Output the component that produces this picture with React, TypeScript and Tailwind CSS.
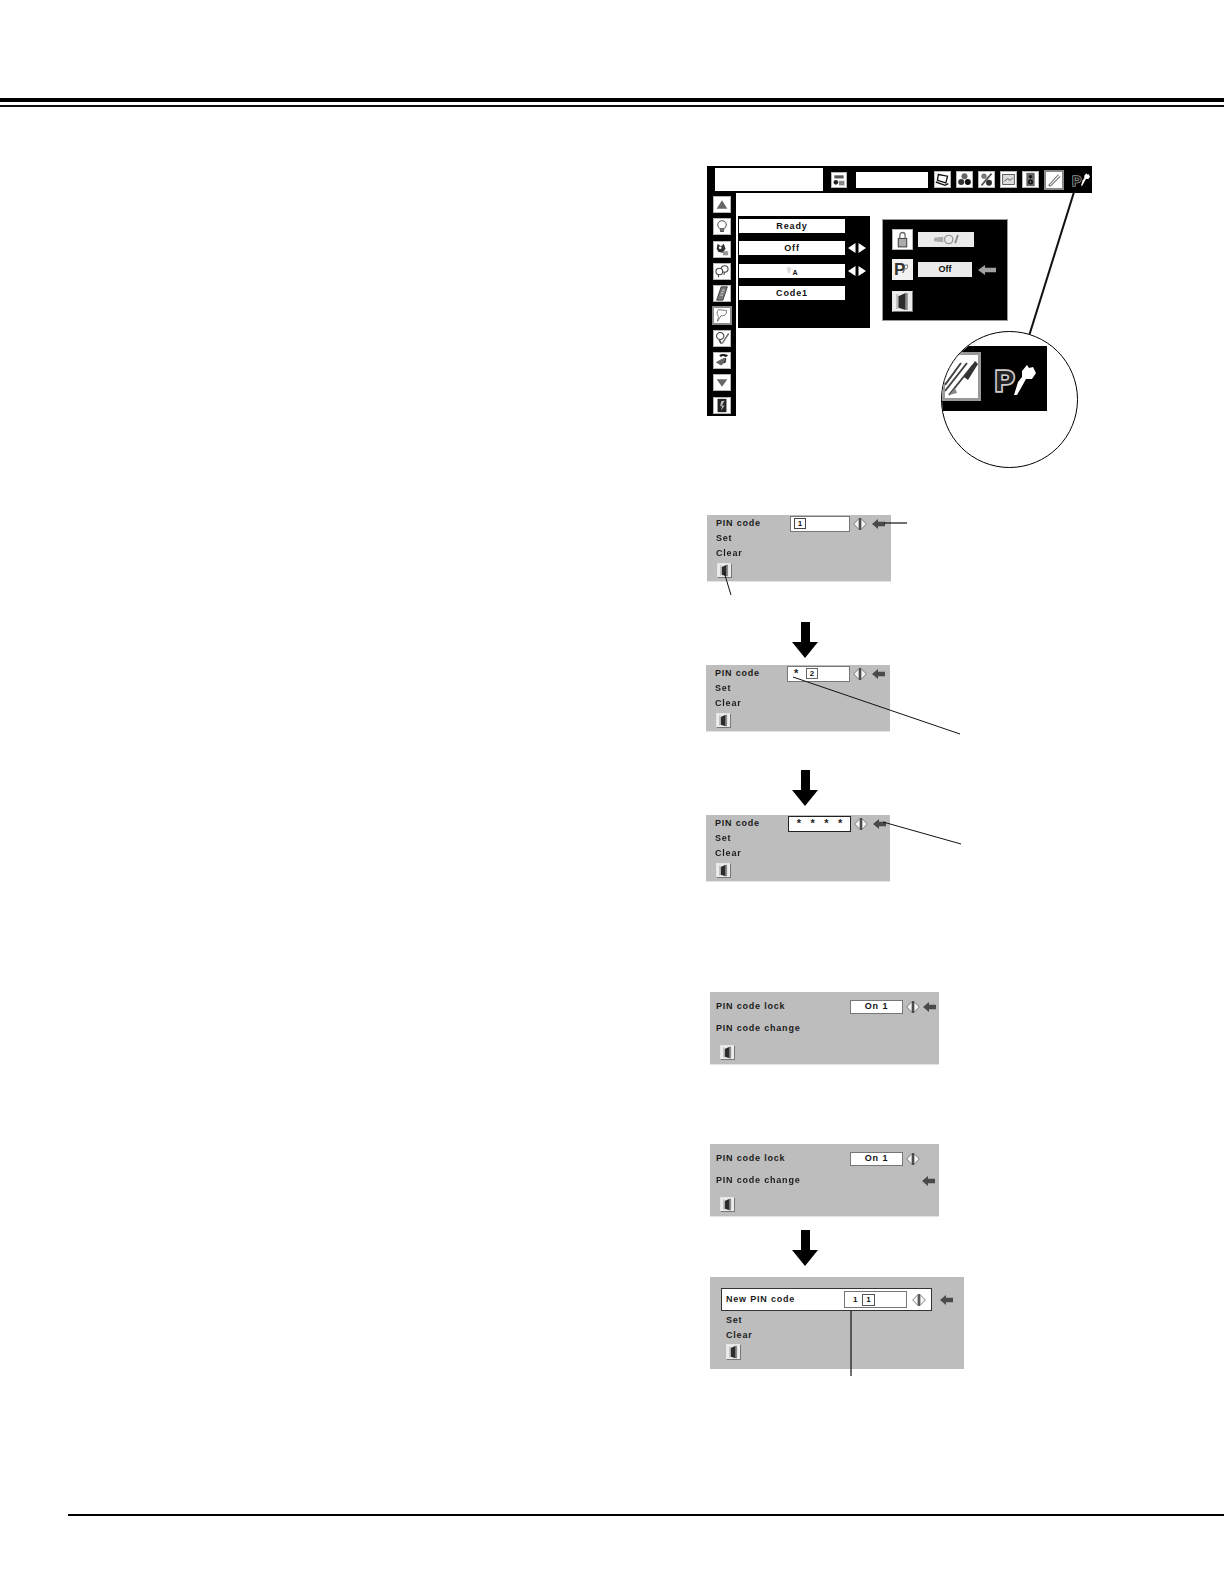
import React from "react";

const FONT = "[font-family:'Liberation_Sans',Arial,sans-serif]";

function Tile({
  w = 18,
  h = 18,
  selected = false,
  children,
}: {
  w?: number;
  h?: number;
  selected?: boolean;
  children: React.ReactNode;
}) {
  return (
    <div
      className={`shrink-0 bg-white ${selected ? "border-2 border-[#8a8a8a]" : "border border-[#b5b5b5]"}`}
      style={{ width: w, height: h }}
    >
      <svg viewBox="0 0 18 18" preserveAspectRatio="none" className="block h-full w-full">
        {children}
      </svg>
    </div>
  );
}

function DoorTile({ w = 15, h = 15 }: { w?: number; h?: number }) {
  return (
    <div className="shrink-0 border-t border-l border-[#e6e6e6] border-r border-b border-r-[#777] border-b-[#777] bg-[#ececec]" style={{ width: w, height: h }}>
      <svg viewBox="0 0 18 18" preserveAspectRatio="none" className="block h-full w-full">
        <path d="M5 4 L12 1 V17 L5 15 Z" fill="#2c2c2c" />
        <path d="M12 1 H14 V17 H12 Z" fill="#8a8a8a" />
        <path d="M3 2 H5 V16 H3 Z" fill="#bbb" />
      </svg>
    </div>
  );
}

const sideIcons: React.ReactNode[] = [
  <path key="a" d="M9 4 L15 14 H3 Z" fill="#666" />,
  <g key="b" fill="none" stroke="#555" strokeWidth="1.2">
    <circle cx="9" cy="7" r="4.8" />
    <path d="M7 12 L7.5 15 H10.5 L11 12" fill="#777" />
  </g>,
  <g key="c">
    <path d="M4 2 L8 5 L11 2 L13 8 L10 13 L5 12 L3 8 Z" fill="#333" />
    <path d="M10 11 H16 V16 H10 Z" fill="#999" />
    <circle cx="7" cy="7" r="1.5" fill="#fff" />
  </g>,
  <g key="d" fill="#fff" stroke="#444" strokeWidth="1.2">
    <circle cx="12" cy="6" r="3.8" />
    <circle cx="6" cy="9" r="3.8" />
    <path d="M5 13 L5 16 M12 10 L11 13" />
  </g>,
  <g key="e">
    <path d="M8 1 H15 L10 17 H3 Z" fill="#777" stroke="#333" />
    <path d="M9 5 L12 5 M8 8 L11 8 M7 11 L10 11" stroke="#ddd" />
  </g>,
  <g key="f" fill="none" stroke="#666" strokeWidth="1">
    <path d="M5 2 L14 3 L14 6 C13 9 10 10 8 9 L4 16 L5 10 C3 8 3 4 5 2 Z" />
  </g>,
  <g key="g">
    <circle cx="7" cy="6" r="4.2" fill="#fff" stroke="#444" strokeWidth="1.2" />
    <path d="M6 11 L8 15" stroke="#444" strokeWidth="2" />
    <path d="M16 2 L9 14 L8 16 L10 15 L17 4 Z" fill="#666" />
  </g>,
  <g key="h">
    <path d="M2 11 L9 7 L14 10 L8 15 Z" fill="#666" />
    <path d="M6 3 C8 0 14 1 16 3 L13 5 C11 3 9 3 8 5 Z" fill="#222" />
    <path d="M10 7 L13 7 L12 12" stroke="#222" fill="none" strokeWidth="1.4" />
  </g>,
  <path key="i" d="M3 5 H15 L9 14 Z" fill="#666" />,
  <g key="j">
    <path d="M4 1 H14 V17 H4 Z" fill="#222" />
    <path d="M8 4 L12 3 L9 9 L12 9 L8 15 L9 10 L7 10 Z" fill="#bbb" />
  </g>,
];

const barIcons: React.ReactNode[] = [
  <g key="a" fill="none" stroke="#111" strokeWidth="1.6">
    <path d="M4 3 L15 5 L13 13 L3 10 Z" />
    <path d="M1 12 L12 16 L16 14" />
  </g>,
  <g key="b" fill="#333">
    <circle cx="9" cy="5" r="3.6" fill="#666" />
    <circle cx="5" cy="12" r="3.6" />
    <circle cx="13" cy="12" r="3.6" fill="#111" />
  </g>,
  <g key="c">
    <circle cx="6" cy="5" r="3.2" fill="#777" />
    <circle cx="12" cy="13" r="3.6" fill="#333" />
    <path d="M15 2 L3 16" stroke="#555" strokeWidth="2.2" />
  </g>,
  <g key="d" fill="none" stroke="#444">
    <rect x="2" y="3" width="14" height="12" fill="#ddd" />
    <path d="M4 11 L8 8 L11 10 L14 7" />
  </g>,
  <g key="e">
    <rect x="4" y="1" width="10" height="16" fill="#666" />
    <circle cx="9" cy="5.5" r="2" fill="#111" />
    <circle cx="9" cy="12" r="3" fill="#111" />
    <circle cx="9" cy="12" r="1" fill="#aaa" />
  </g>,
  <g key="f" fill="none" stroke="#777" strokeWidth="1.2">
    <path d="M3 15 L14 3 M5 16 L16 5" />
    <path d="M3 15 L5 16" />
  </g>,
];

function KeyGlyph({ className = "" }: { className?: string }) {
  return (
    <svg viewBox="0 0 22 30" className={className}>
      <path d="M8 6 L13 0 L15 3 L19 2 L22 8 L18 14 L12 14 L7 23 L3 30 L0 30 L4 17 L8 12 Z" fill="#fff" />
    </svg>
  );
}

function WhiteTriangles() {
  return (
    <svg viewBox="0 0 18 10" className="ml-[3px] h-[10px] w-[18px] shrink-0">
      <path d="M7.5 0 V10 L0 5 Z M10.5 0 V10 L18 5 Z" fill="#fff" />
    </svg>
  );
}

function Spinner() {
  return (
    <svg viewBox="0 0 14 12" className="h-[12px] w-[14px] shrink-0">
      <path d="M6 .5 V11.5 L.7 6 Z" fill="#f4f4f4" stroke="#555" strokeWidth=".7" />
      <path d="M8 .5 V11.5 L13.3 6 Z" fill="#f4f4f4" stroke="#555" strokeWidth=".7" />
      <path d="M7 0 V12" stroke="#222" strokeWidth="1.3" />
    </svg>
  );
}

function GrayArrow() {
  return (
    <svg viewBox="0 0 13 10" className="h-[10px] w-[13px] shrink-0">
      <path d="M0 5 L6 0 V2.8 H13 V7.2 H6 V10 Z" fill="#4a4a4a" />
    </svg>
  );
}

function BigArrow() {
  return (
    <svg viewBox="0 0 26 36" className="block h-[36px] w-[26px]">
      <path d="M9 0 H18 V20 H26 L13 36 L0 20 H9 Z" fill="#000" />
    </svg>
  );
}

const LABEL = "text-[9px] leading-[14.5px] font-bold tracking-[0.8px] text-[#1c1c1c] whitespace-nowrap";
const MENU = "text-[9px] leading-none font-bold tracking-[0.9px] text-[#111]";

function MenuField({ children }: { children: React.ReactNode }) {
  return <div className={`flex h-[14px] w-[106px] items-center justify-center bg-white ${MENU}`}>{children}</div>;
}

function PinEntry({
  className,
  gapClass,
  fieldClass,
  children,
}: {
  className: string;
  gapClass: string;
  fieldClass: string;
  children: React.ReactNode;
}) {
  return (
    <div className={`flex h-[67px] w-[184px] flex-col bg-[#bdbdbd] border-b border-[#e4e4e4] pl-[9px] ${className}`}>
      <div className="flex h-[17px] items-center">
        <span className={`${LABEL} ${gapClass}`}>PIN code</span>
        <div className={`flex h-[16px] items-center bg-white ${fieldClass}`}>{children}</div>
        <div className="ml-[3px]">
          <Spinner />
        </div>
        <div className="ml-[5px]">
          <GrayArrow />
        </div>
      </div>
      <div className="mt-[-2px] flex flex-col">
        <span className={`mt-[1px] ${LABEL}`}>Set</span>
        <span className={LABEL}>Clear</span>
      </div>
      <div className="ml-[1px] mt-[3px]">
        <DoorTile w={15} h={15} />
      </div>
    </div>
  );
}

function LockPanel({ className, arrowOnChange = false }: { className: string; arrowOnChange?: boolean }) {
  return (
    <div className={`flex h-[73px] w-[229px] flex-col border-b border-[#e4e4e4] bg-[#bdbdbd] pl-[6px] ${className}`}>
      <div className="mt-[7px] flex h-[15px] items-center">
        <span className={`w-[134px] ${LABEL}`}>PIN code lock</span>
        <div className="flex h-[14px] w-[53px] items-center justify-center border border-[#777] bg-white text-[9px] font-bold tracking-[0.9px] text-[#111]">
          On 1
        </div>
        <div className="ml-[3px]">
          <Spinner />
        </div>
        {!arrowOnChange && (
          <div className="ml-[3px]">
            <GrayArrow />
          </div>
        )}
      </div>
      <div className="mt-[7px] flex h-[15px] items-center">
        <span className={`w-[206px] ${LABEL}`}>PIN code change</span>
        {arrowOnChange && <GrayArrow />}
      </div>
      <div className="ml-[4px] mt-[9px]">
        <DoorTile w={15} h={15} />
      </div>
    </div>
  );
}

function NewPinPanel() {
  return (
    <div className="ml-[4px] mt-[11px] flex h-[92px] w-[254px] flex-col bg-[#bdbdbd] pl-[11px] pt-[11px]">
      <div className="flex items-center">
        <div className="flex h-[23px] w-[211px] items-center border border-[#333] bg-white pl-[4px]">
          <span className={`w-[118px] ${LABEL}`}>New PIN code</span>
          <div className="flex h-[17px] w-[63px] items-center border border-[#777] pl-[8px] text-[8px] font-bold text-[#111]">
            <span className="w-[9px]">1</span>
            <span className="flex h-[12px] w-[13px] items-center justify-center border border-[#555]">1</span>
          </div>
          <div className="ml-[5px]">
            <Spinner />
          </div>
        </div>
        <div className="ml-[8px]">
          <GrayArrow />
        </div>
      </div>
      <span className={`ml-[5px] mt-[2px] ${LABEL}`}>Set</span>
      <span className={`ml-[5px] ${LABEL}`}>Clear</span>
      <div className="ml-[5px] mt-[2px]">
        <DoorTile w={15} h={16} />
      </div>
    </div>
  );
}

function ArrowDown({ className }: { className: string }) {
  return (
    <div className={`ml-[86px] ${className}`}>
      <BigArrow />
    </div>
  );
}

function TopFigure() {
  return (
    <div className="flex flex-col">
      <div className="ml-[1px] flex h-[27px] w-[385px] items-center bg-black">
        <div className="ml-[8px] h-[23px] w-[108px] bg-white" />
        <div className="ml-[8px]">
          <Tile w={16} h={16}>
            <rect x="3" y="3" width="12" height="4" fill="#555" />
            <circle cx="5" cy="12" r="3" fill="#222" />
            <path d="M9 10 H16 V16 H9 Z" fill="#888" />
          </Tile>
        </div>
        <div className="ml-[9px] h-[16px] w-[72px] bg-white" />
        <div className="ml-[6px] flex w-[132px] items-center gap-[5px]">
          {barIcons.map((ic, i) => (
            <Tile key={i} w={i === 5 ? 20 : 17} h={i === 5 ? 20 : 17} selected={i === 5}>
              {ic}
            </Tile>
          ))}
        </div>
        <div className="ml-[6px] mt-[3px] flex items-center">
          <span className="text-[14px] leading-none font-bold text-[#222] [-webkit-text-stroke:1px_#ccc] [paint-order:stroke_fill] [font-family:'Liberation_Sans',sans-serif]">
            P
          </span>
          <KeyGlyph className="-mt-[3px] h-[13px] w-[9px]" />
        </div>
      </div>
      <div className="ml-[1px] flex items-start">
        <div className="flex h-[223px] w-[29px] flex-col items-center gap-[5.3px] bg-black pt-[3px]">
          {sideIcons.map((ic, i) =>
            i === 5 ? (
              <div key={i} className="-my-[1px]">
                <Tile w={20} h={19} selected>
                  {ic}
                </Tile>
              </div>
            ) : (
              <Tile key={i} w={18} h={17}>
                {ic}
              </Tile>
            )
          )}
        </div>
        <div className="ml-[2px] mt-[23px] flex h-[112px] w-[132px] flex-col gap-[8.4px] bg-black pl-[1px] pt-[3px]">
          <div className="flex items-center">
            <MenuField>Ready</MenuField>
          </div>
          <div className="flex items-center">
            <MenuField>Off</MenuField>
            <WhiteTriangles />
          </div>
          <div className="flex items-center">
            <MenuField>
              <svg viewBox="0 0 8 10" className="mr-[1px] h-[9px] w-[6px]">
                <path d="M4 0 C7 0 8 3 6 6 L5 9 H3 L2 6 C0 3 1 0 4 0 Z" fill="#ddd" />
              </svg>
              <span className="mt-[3px] text-[7px]">A</span>
            </MenuField>
            <WhiteTriangles />
          </div>
          <div className="flex items-center">
            <MenuField>Code1</MenuField>
          </div>
        </div>
        <div className="ml-[12px] mt-[26px] flex h-[102px] w-[126px] flex-col gap-[9px] border border-[#999] bg-black pl-[9px] pt-[9px]">
          <div className="flex items-center gap-[5px]">
            <Tile w={21} h={21}>
              <rect x="5" y="8" width="8" height="8" fill="#aaa" stroke="#444" />
              <path d="M6.5 8 V5 C6.5 1.5 11.5 1.5 11.5 5 V8" fill="none" stroke="#666" strokeWidth="1.2" />
            </Tile>
            <div className="flex h-[15px] w-[56px] items-center justify-center bg-[#eaeaea]">
              <svg viewBox="0 0 30 12" className="h-[11px] w-[28px]">
                <circle cx="18" cy="6" r="4.5" fill="none" stroke="#999" strokeWidth="1.5" />
                <path d="M2 4 L12 3 V9 L2 8 Z" fill="#aaa" />
                <path d="M25 10 L28 1" stroke="#888" strokeWidth="2" />
              </svg>
            </div>
          </div>
          <div className="flex items-center gap-[5px]">
            <div className="flex h-[21px] w-[21px] shrink-0 items-center bg-[#f2f2f2] pl-[2px]">
              <span className="text-[17px] leading-none font-bold text-[#333] [font-family:'Liberation_Sans',sans-serif]">P</span>
              <svg viewBox="0 0 8 12" className="-ml-[3px] -mt-[2px] h-[11px] w-[6px]">
                <path d="M1 12 L3 6 L3 2 L7 1 L8 5 L4 7 Z" fill="none" stroke="#555" />
              </svg>
            </div>
            <div className="flex h-[15px] w-[54px] items-center justify-center bg-[#eaeaea] text-[9px] font-bold text-[#111]">
              Off
            </div>
            <div className="ml-[1px]">
              <svg viewBox="0 0 18 10" className="h-[10px] w-[18px]">
                <path d="M0 5 L7 0 V2.8 H18 V7.2 H7 V10 Z" fill="#a0a0a0" />
              </svg>
            </div>
          </div>
          <div className="mt-[2px]">
            <DoorTile w={21} h={21} />
          </div>
        </div>
      </div>
    </div>
  );
}

function Callout() {
  return (
    <div className="absolute left-[941px] top-[331px] h-[137px] w-[137px] overflow-hidden rounded-full border-[1.5px] border-black bg-white">
      <div className="mt-[14px] flex h-[65px] w-[105px] items-start bg-black">
        <div className="mt-[6px] h-[49px] w-[39px] border-[3px] border-[#999] bg-white">
          <svg viewBox="0 0 33 43" className="block h-full w-full">
            <path d="M0 36 L22 8 M4 40 L28 10 M0 30 L16 8" stroke="#444" strokeWidth="2" fill="none" />
            <path d="M19 22 L30 6 L33 9 L23 25 Z" fill="#333" />
            <path d="M4 40 L12 38 L10 33 Z" fill="#888" />
          </svg>
        </div>
        <div className="ml-[14px] mt-[22px] flex items-start">
          <span className="text-[29px] leading-[26px] font-bold text-[#222] [-webkit-text-stroke:3.5px_#ccc] [paint-order:stroke_fill] [font-family:'Liberation_Sans',sans-serif]">
            P
          </span>
          <KeyGlyph className="-mt-[3px] h-[30px] w-[22px]" />
        </div>
      </div>
    </div>
  );
}

function Leaders() {
  const lines: [number, number, number, number, number][] = [
    [1074, 192, 1029, 336, 2],
    [884, 523, 907, 523, 1.2],
    [724, 572, 731, 595, 1],
    [793, 677, 960, 734, 1],
    [883, 822, 961, 844, 1],
    [851, 1311, 851, 1376, 1.2],
  ];
  return (
    <svg viewBox="0 0 1224 1570" className="pointer-events-none absolute inset-0 h-full w-full">
      {lines.map(([x1, y1, x2, y2, w], i) => (
        <line key={i} x1={x1} y1={y1} x2={x2} y2={y2} stroke="#111" strokeWidth={w} />
      ))}
    </svg>
  );
}

const STAR = "text-[11px] font-bold leading-none text-[#222]";

export default function App() {
  return (
    <div className={`relative h-[1570px] w-[1224px] overflow-hidden bg-white ${FONT}`}>
      <div className="pt-[98px]">
        <div className="h-[4px] bg-black" />
        <div className="mt-[3px] h-[2px] bg-[#111]" />
      </div>

      <div className="ml-[706px] mt-[59px] flex flex-col blur-[0.4px]">
        <TopFigure />

        <PinEntry className="ml-[1px] mt-[99px]" gapClass="w-[74px]" fieldClass="w-[60px] border border-[#777] pl-[3px]">
          <span className="flex h-[11px] w-[12px] items-center justify-center border border-[#444] text-[8px] font-bold text-[#111]">1</span>
        </PinEntry>
        <ArrowDown className="mt-[40px]" />
        <PinEntry className="mt-[7px]" gapClass="w-[72px]" fieldClass="w-[63px] border border-[#777] pl-[6px]">
          <span className={`w-[12px] ${STAR}`}>*</span>
          <span className="flex h-[11px] w-[12px] items-center justify-center border border-[#666] text-[8px] font-bold text-[#111]">2</span>
        </PinEntry>
        <ArrowDown className="mt-[38px]" />
        <PinEntry
          className="mt-[9px]"
          gapClass="w-[73px]"
          fieldClass="w-[63px] border border-[#222] justify-around px-[3px]"
        >
          <span className={STAR}>*</span>
          <span className={STAR}>*</span>
          <span className={STAR}>*</span>
          <span className={STAR}>*</span>
        </PinEntry>

        <LockPanel className="ml-[4px] mt-[110px]" />
        <LockPanel className="ml-[4px] mt-[79px]" arrowOnChange />
        <ArrowDown className="mt-[13px]" />
        <NewPinPanel />
      </div>

      <Leaders />
      <Callout />

      <div className="absolute bottom-[54px] left-[68px] right-0 h-[2px] bg-black" />
    </div>
  );
}
